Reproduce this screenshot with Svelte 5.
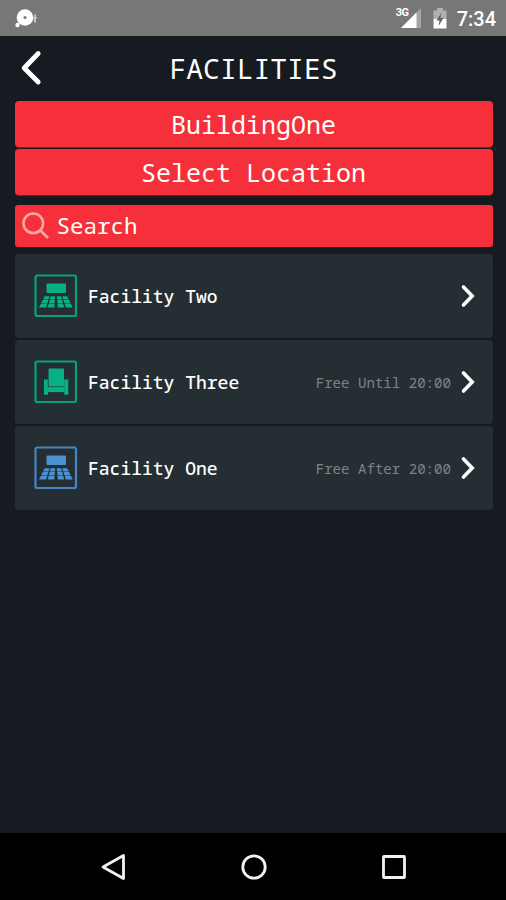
<script lang="ts">
  interface Facility {
    name: string;
    kind: 'room' | 'seat';
    status: 'free' | 'booked';
    note?: string;
  }

  const facilities: Facility[] = [
    { name: 'Facility Two', kind: 'room', status: 'free' },
    { name: 'Facility Three', kind: 'seat', status: 'free', note: 'Free Until 20:00' },
    { name: 'Facility One', kind: 'room', status: 'booked', note: 'Free After 20:00' }
  ];
</script>

<div class="screen">
  <div class="status-bar">
    <svg class="notification" width="26" height="24" viewBox="0 0 26 24">
      <circle cx="12" cy="11.500" r="8.300" fill="#fff" />
      <circle cx="12" cy="11.500" r="1.500" fill="#777" />
      <circle cx="4.500" cy="19" r="2.200" fill="#fff" />
      <path d="M22 8.500v8M20.300 12h3.500" stroke="#c4c4c4" stroke-width="2" />
    </svg>
    <div class="status-right">
      <div class="signal">
        <span class="network">3G</span>
        <svg width="22" height="21" viewBox="0 0 22 21">
          <path d="M21 0v20H1z" fill="#a5a5a5" />
          <path d="M16.500 4.500V20H1z" fill="#fff" />
        </svg>
      </div>
      <svg class="battery" width="14" height="21" viewBox="0 0 14 21">
        <path d="M4 0h6v2.500h3.500V11H.5V2.500H4z" fill="#b0b0b0" />
        <path d="M.5 11h13v9.500H.5z" fill="#fff" />
        <path d="M8.500 4.500L3.500 12.500h3l-1 5.500 5-8h-3z" fill="#666" />
      </svg>
      <span class="clock">7:34</span>
    </div>
  </div>

  <header>
    <svg class="back" width="22" height="36" viewBox="0 0 22 36">
      <path d="M18.200 3.500L4.200 18l14 14" />
    </svg>
    <h1>FACILITIES</h1>
  </header>

  <main>
    <button class="picker">BuildingOne</button>
    <button class="picker">Select Location</button>

    <div class="search">
      <svg width="28" height="28" viewBox="0 0 28 28">
        <circle cx="11.300" cy="11.300" r="9.800" />
        <path d="M18.500 18.500l7.500 7.500" />
      </svg>
      <span>Search</span>
    </div>

    <ul>
      {#each facilities as facility}
        <li>
          <svg class="icon {facility.status}" width="44" height="44" viewBox="0 0 44 44">
            <rect class="frame" x="1.500" y="1.500" width="40.500" height="40.500" rx="1.800" />
            {#if facility.kind === 'room'}
              <rect x="12.500" y="9.500" width="19.500" height="9.500" rx="1" />
              <path d="M10.600 22.300h5l-1 3.200H9zM16.700 22.300h4.500l-.3 3.200h-5zM22.700 22.300h4.400l.9 3.200h-4.900zM28.200 22.300h5l1.600 3.200h-5.600z" />
              <path d="M8.700 26.100h5.600l-1 3.300H7.100zM15.700 26.100h5.200l-.3 3.300h-5.800zM23.200 26.100h5l.9 3.300h-5.600zM29.500 26.100h5.600l1.600 3.300h-6.200z" />
              <path d="M6.800 30h6.300l-1 3.500H5zM14.600 30h6l-.3 3.500h-6.600zM23.500 30h5.800l.9 3.500h-6.400zM30.800 30H37l1.700 3.500h-7z" />
            {:else}
              <rect x="14.500" y="8.500" width="15.500" height="18" rx="1" />
              <rect x="13.500" y="27.100" width="17" height="5" />
              <path d="M10 19.500h3.800V31h.2v3.800h-4zM30.200 19.500h4.100v15.300h-4V31h-.1z" />
            {/if}
          </svg>
          <span class="name">{facility.name}</span>
          {#if facility.note}
            <span class="note">{facility.note}</span>
          {/if}
          <svg class="chevron" width="16" height="24" viewBox="0 0 16 24">
            <path d="M3.500 3l8.700 9-8.700 9" />
          </svg>
        </li>
      {/each}
    </ul>
  </main>

  <nav>
    <svg width="28" height="28" viewBox="0 0 28 28">
      <path d="M23.500 2.500v23L3 14z" />
    </svg>
    <svg width="28" height="28" viewBox="0 0 28 28">
      <circle cx="14" cy="14" r="11.200" />
    </svg>
    <svg width="28" height="28" viewBox="0 0 28 28">
      <rect x="3.500" y="3.500" width="21" height="21" rx="0.500" />
    </svg>
  </nav>
</div>

<style>
  :global(body) {
    background: #151b21;
  }

  .screen {
    display: flex;
    flex-direction: column;
    height: 900px;
    background: #151b21;
    color: #fff;
    font-family: 'Droid Sans Mono', 'Noto Sans Mono', 'DejaVu Sans Mono', monospace;
  }

  /* Android status bar */
  .status-bar {
    display: flex;
    align-items: center;
    justify-content: space-between;
    box-sizing: border-box;
    height: 36px;
    padding: 0 10px 0 13px;
    background: #777;
  }

  .notification {
    margin-top: -1px;
  }

  .status-right {
    display: flex;
    align-items: center;
  }

  .signal {
    position: relative;
    height: 21px;
    margin-right: 11px;
  }

  .network {
    position: absolute;
    top: -1px;
    left: -4px;
    font: bold 11px/12px Roboto, sans-serif;
    letter-spacing: -0.5px;
  }

  .battery {
    margin-right: 10px;
  }

  .clock {
    font: 500 20px/36px Roboto, sans-serif;
    padding-top: 2px;
  }

  header {
    display: grid;
    grid-template-columns: 60px 1fr 60px;
    align-items: center;
    height: 63px;
    padding-bottom: 2px;
  }

  .back {
    margin-left: 20px;
    fill: none;
    stroke: #fff;
    stroke-width: 4.800;
    stroke-linecap: round;
    stroke-linejoin: round;
  }

  h1 {
    margin: 0 0 0 1px;
    font-size: 28px;
    font-weight: 400;
    line-height: 36px;
    text-align: center;
  }

  main {
    flex: 1;
    padding: 0 13.500px 0 14.500px;
  }

  .picker {
    display: block;
    width: 100%;
    height: 46px;
    margin: 0 0 2.400px;
    padding: 0;
    border: 0;
    border-radius: 4px;
    background: #f5303b;
    box-shadow: 0 1px 0 #7a1e28;
    color: #fff;
    font-family: inherit;
    font-size: 25px;
    line-height: 46px;
  }

  .search {
    display: flex;
    align-items: center;
    height: 42px;
    margin: 9.600px 0 7.500px;
    padding-left: 7px;
    border-radius: 3px;
    background: #f5303b;
    font-size: 22.500px;
  }

  .search svg {
    margin-right: 7px;
    fill: none;
    stroke: #ffa3a6;
    stroke-width: 2.600;
  }

  ul {
    display: flex;
    flex-direction: column;
    gap: 2px;
    margin: 0;
    padding: 0;
    list-style: none;
  }

  li {
    display: flex;
    align-items: center;
    height: 84px;
    padding: 0 17px 0 19px;
    border-radius: 4px;
    background: #252e33;
  }

  .icon {
    margin-right: 10.500px;
  }

  .icon.free {
    fill: #09b083;
    stroke: #09a07a;
  }

  .icon.booked {
    fill: #4b92d2;
    stroke: #4686c2;
  }

  .icon > * {
    stroke: none;
  }

  .icon .frame {
    fill: none;
    stroke: inherit;
    stroke-width: 2.200;
  }

  .name {
    flex: 1;
    font-size: 18px;
    font-weight: 500;
  }

  .note {
    margin-right: 8.500px;
    color: #7d8489;
    font-size: 14.100px;
  }

  .chevron {
    fill: none;
    stroke: #fff;
    stroke-width: 3.600;
    stroke-linecap: round;
    stroke-linejoin: miter;
  }

  /* Android navigation bar */
  nav {
    display: flex;
    align-items: center;
    justify-content: space-between;
    height: 67px;
    padding: 0 98px 0 100px;
    background: #000;
  }

  nav svg {
    fill: none;
    stroke: #f2f2f2;
    stroke-width: 2.800;
    stroke-linejoin: round;
  }
</style>
